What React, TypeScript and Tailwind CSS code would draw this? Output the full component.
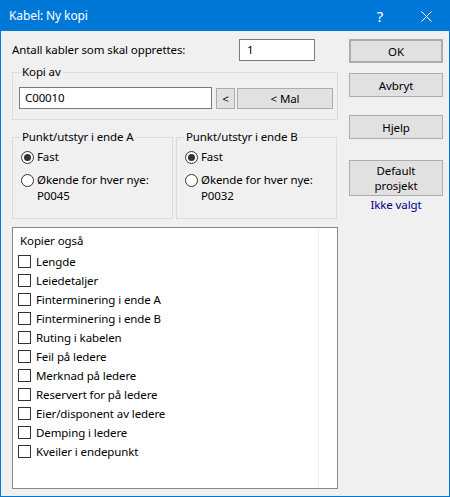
import React from "react";

const ITEMS = [
  "Lengde",
  "Leiedetaljer",
  "Finterminering i ende A",
  "Finterminering i ende B",
  "Ruting i kabelen",
  "Feil på ledere",
  "Merknad på ledere",
  "Reservert for på ledere",
  "Eier/disponent av ledere",
  "Demping i ledere",
  "Kveiler i endepunkt",
];

const font = { fontFamily: '"Segoe UI", "Noto Sans", sans-serif' };

function Radio({ checked }: { checked?: boolean }) {
  return (
    <span className="w-[13px] h-[13px] rounded-full border border-[#333333] bg-white flex items-center justify-center shrink-0">
      {checked && <span className="w-[7px] h-[7px] rounded-full bg-[#333333]" />}
    </span>
  );
}

function Btn({ children, className = "" }: { children: React.ReactNode; className?: string }) {
  return (
    <div
      className={
        "bg-[#e1e1e1] border border-[#adadad] flex items-center justify-center text-center leading-[15px] " +
        className
      }
    >
      {children}
    </div>
  );
}

function Group({ label, className = "", children }: { label: string; className?: string; children: React.ReactNode }) {
  return (
    <div className={"relative border border-[#dcdcdc] " + className}>
      <span className="absolute -top-[9px] left-[7px] px-[2px] bg-[#f0f0f0] leading-[16px]">{label}</span>
      {children}
    </div>
  );
}

function PunktBox({ label, code }: { label: string; code: string }) {
  return (
    <Group label={label} className="w-[161px] h-[82px] pl-[8px] pt-[12px]">
      <div className="flex items-center gap-[3px] h-[14px]">
        <Radio checked />
        <span>Fast</span>
      </div>
      <div className="flex items-center gap-[3px] h-[14px] mt-[9px]">
        <Radio />
        <span>Økende for hver nye:</span>
      </div>
      <div className="pl-[16px] leading-[16px] mt-[1px]">{code}</div>
    </Group>
  );
}

export default function App() {
  return (
    <div
      className="w-[450px] h-[497px] border border-[#0078d7] bg-[#f0f0f0] flex flex-col text-[11.5px] tracking-[-0.1px] text-black overflow-hidden"
      style={font}
    >
      <div className="h-[30px] bg-[#0078d7] text-white text-[12px] flex items-center shrink-0">
        <span className="pl-[8px] flex-1">Kabel: Ny kopi</span>
        <span className="w-[46px] text-center text-[15px]">?</span>
        <span className="w-[46px] flex justify-center">
          <svg width="11" height="11" viewBox="0 0 11 11">
            <path d="M0.5 0.5 L10.5 10.5 M10.5 0.5 L0.5 10.5" stroke="white" strokeWidth="1" />
          </svg>
        </span>
      </div>

      <div className="flex pl-[11px] pt-[8px]">
        {/* left column */}
        <div className="w-[326px] flex flex-col">
          <div className="flex items-center h-[22px]">
            <span className="w-[227px]">Antall kabler som skal opprettes:</span>
            <div className="w-[76px] h-[22px] border border-[#7a7a7a] bg-white pl-[7px] flex items-center">1</div>
          </div>

          <Group label="Kopi av" className="mt-[11px] h-[48px] flex items-start pt-[14px] pl-[6px]">
            <div className="w-[193px] h-[22px] border border-[#7a7a7a] bg-white pl-[5px] flex items-center">C00010</div>
            <Btn className="w-[19px] h-[21px] ml-[4px] mt-[1px]">&lt;</Btn>
            <Btn className="w-[96px] h-[21px] ml-[2px] mt-[1px]">&lt; Mal</Btn>
          </Group>

          <div className="flex gap-[3px] mt-[17px]">
            <PunktBox label="Punkt/utstyr i ende A" code="P0045" />
            <PunktBox label="Punkt/utstyr i ende B" code="P0032" />
          </div>

          <div className="mt-[8px] h-[262px] border border-[#828790] bg-white relative">
            <div className="absolute top-0 bottom-0 left-[305px] w-px bg-[#f0f0f0]" />
            <div className="pl-[7px] pt-[5px] leading-[16px]">Kopier også</div>
            <div className="flex flex-col pl-[5px] mt-[3px]">
              {ITEMS.map((t) => (
                <div key={t} className="flex items-center h-[19px] gap-[5px]">
                  <span className="w-[13px] h-[13px] border border-[#333333] bg-white shrink-0" />
                  <span>{t}</span>
                </div>
              ))}
            </div>
          </div>
        </div>

        {/* right column */}
        <div className="w-[94px] ml-[11px] flex flex-col">
          <Btn className="h-[24px] border-2 border-[#0078d7]">OK</Btn>
          <Btn className="h-[24px] mt-[10px]">Avbryt</Btn>
          <Btn className="h-[24px] mt-[18px]">Hjelp</Btn>
          <Btn className="h-[36px] mt-[21px]">
            Default
            <br />
            prosjekt
          </Btn>
          <div className="text-center text-[#000080] leading-[16px] mt-[1px]">Ikke valgt</div>
        </div>
      </div>
    </div>
  );
}
